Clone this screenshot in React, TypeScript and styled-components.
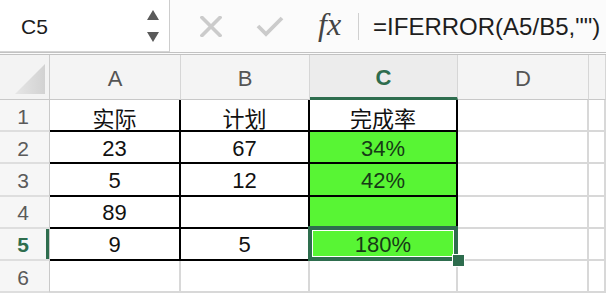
import styled, { createGlobalStyle } from "styled-components"

const GlobalStyle = createGlobalStyle`
  html, body {
    margin: 0;
    padding: 0;
    background: #ffffff;
    overflow: hidden;
  }
  body {
    font-family: "Liberation Sans", "Noto Sans CJK SC", sans-serif;
  }
`

const GREEN = "#2e6d4e"
const FILL = "#58f534"

const Page = styled.div`
  width: 606px;
  height: 298px;
  overflow: hidden;
  background: #ffffff;`

const FormulaBar = styled.div`
  display: flex;
  align-items: stretch;
  height: 52px;
  background: #fbfbfb;
  border-bottom: 3px double #c2c2c2;
  box-sizing: content-box;`

const NameBox = styled.div`
  display: flex;
  align-items: center;
  width: 170px;
  box-sizing: border-box;
  padding-left: 21px;
  padding-right: 10px;
  background: #ffffff;
  border-right: 1px solid #cdcdcd;
  border-bottom: 1px solid #d5d5d5;
  font-size: 21px;
  color: #1c1c1c;`

const NameText = styled.span`
  flex-grow: 1;
  padding-top: 2px;`

const Stepper = styled.div`
  display: flex;
  flex-direction: column;
  gap: 12px;`

const Arrow = styled.div<{ $down?: boolean }>`
  width: 0;
  height: 0;
  border-left: 6.5px solid transparent;
  border-right: 6.5px solid transparent;
  ${(p) => (p.$down ? "border-top: 10px solid #5a5a5a;" : "border-bottom: 10px solid #5a5a5a;")}`

const Tools = styled.div`
  display: flex;
  align-items: center;
  padding-left: 30px;
  gap: 34px;`

const Fx = styled.span`
  font-family: "Liberation Serif", serif;
  font-style: italic;
  font-size: 32px;
  color: #444444;
  padding-bottom: 4px;`

const Divider = styled.div`
  width: 1px;
  height: 27px;
  background: #d0d0d0;
  margin-left: -17px;`

const Formula = styled.div`
  display: flex;
  align-items: center;
  padding-left: 14px;
  font-size: 24px;
  color: #1e1e1e;
  white-space: nowrap;
  padding-top: 2px;`

const Sheet = styled.div`
  display: grid;
  grid-template-columns: 50px 131px 129px 148px 131px 1fr;
  grid-template-rows: 45px repeat(6, 32.2px);`

const Corner = styled.div`
  display: flex;
  align-items: flex-end;
  justify-content: flex-end;
  padding: 0 4px 5px 0;
  background: #f3f3f3;
  border-right: 1px solid #cccccc;
  border-bottom: 1px solid #c8c8c8;
  box-sizing: border-box;`

const CornerMark = styled.div`
  width: 30px;
  height: 30px;
  background: linear-gradient(90deg, #e6e6e6, #d2d2d2);
  clip-path: polygon(100% 0, 100% 100%, 0 100%);`

const ColHeader = styled.div<{ $active?: boolean }>`
  display: flex;
  align-items: center;
  justify-content: center;
  padding-top: 4px;
  box-sizing: border-box;
  background: ${(p) => (p.$active ? "#ececec" : "#f4f4f4")};
  border-right: 1px solid #d6d6d6;
  border-bottom: ${(p) => (p.$active ? `3px solid ${GREEN}` : "1px solid #c8c8c8")};
  font-size: 22px;
  font-weight: ${(p) => (p.$active ? 700 : 400)};
  color: ${(p) => (p.$active ? GREEN : "#555555")};`

const RowHeader = styled.div<{ $active?: boolean }>`
  display: flex;
  align-items: center;
  justify-content: center;
  padding-top: 3px;
  padding-right: 3px;
  box-sizing: border-box;
  background: #f6f6f6;
  border-right: 1px solid #c9c9c9;
  border-bottom: 2px solid #dedede;
  box-shadow: ${(p) => (p.$active ? `inset -3px 0 0 ${GREEN}` : "none")};
  font-size: 21px;
  font-weight: ${(p) => (p.$active ? 700 : 400)};
  color: ${(p) => (p.$active ? GREEN : "#5a5a5a")};`

const Cell = styled.div<{ $boxed?: boolean; $fill?: boolean }>`
  position: relative;
  display: flex;
  align-items: center;
  justify-content: center;
  padding-top: 3px;
  box-sizing: border-box;
  background: ${(p) => (p.$fill ? FILL : "#ffffff")};
  border-right: 2px solid ${(p) => (p.$boxed ? "#000000" : "#d8d8d8")};
  border-bottom: 2px solid ${(p) => (p.$boxed ? "#000000" : "#d8d8d8")};
  font-family: "Liberation Sans", "Noto Sans CJK SC", sans-serif;
  font-size: 22px;
  color: ${(p) => (p.$fill ? "#163a16" : "#111111")};`

const Selection = styled.div`
  position: absolute;
  z-index: 1;
  left: -2px;
  top: -3px;
  right: -2px;
  bottom: -2px;
  border: 4px solid ${GREEN};
  box-shadow: inset 0 0 0 1px #ffffff;
  pointer-events: none;`

const FillHandle = styled.div`
  position: absolute;
  z-index: 2;
  right: -8px;
  bottom: -7px;
  width: 11px;
  height: 11px;
  background: ${GREEN};
  box-shadow: 0 0 0 1px #ffffff;`

const columns = ["A", "B", "C", "D", ""]

const rows: [string, string, string][] = [
  ["实际", "计划", "完成率"],
  ["23", "67", "34%"],
  ["5", "12", "42%"],
  ["89", "", ""],
  ["9", "5", "180%"],
]

function CrossIcon() {
  return (
    <svg width="22" height="21" viewBox="0 0 22 21">
      <path d="M2 1.5 L20 19.5 M20 1.5 L2 19.5" stroke="#cbcbcb" strokeWidth="3.6" strokeLinecap="square" />
    </svg>
  )
}

function CheckIcon() {
  return (
    <svg width="28" height="21" viewBox="0 0 28 21">
      <path d="M2 10 L10 18 L26 2" stroke="#cbcbcb" strokeWidth="3.8" fill="none" />
    </svg>
  )
}

export default function App() {
  return (
    <Page>
      <GlobalStyle />
      <FormulaBar>
        <NameBox>
          <NameText>C5</NameText>
          <Stepper>
            <Arrow />
            <Arrow $down />
          </Stepper>
        </NameBox>
        <Tools>
          <CrossIcon />
          <CheckIcon />
          <Fx>fx</Fx>
          <Divider />
        </Tools>
        <Formula>=IFERROR(A5/B5,"")</Formula>
      </FormulaBar>
      <Sheet>
        <Corner>
          <CornerMark />
        </Corner>
        {columns.map((c) => (
          <ColHeader key={c || "E"} $active={c === "C"}>{c}</ColHeader>
        ))}
        {[1, 2, 3, 4, 5, 6].map((n) => {
          const data = rows[n - 1]
          return [
            <RowHeader key={`h${n}`} $active={n === 5}>{n}</RowHeader>,
            ...[0, 1, 2].map((i) => (
              <Cell key={`${n}-${i}`} $boxed={!!data} $fill={!!data && i === 2 && n > 1}>
                {data ? data[i] : ""}
                {n === 5 && i === 2 && (
                  <>
                    <Selection />
                    <FillHandle />
                  </>
                )}
              </Cell>
            )),
            <Cell key={`${n}-d`} />,
            <Cell key={`${n}-e`} />,
          ]
        })}
      </Sheet>
    </Page>
  )
}
